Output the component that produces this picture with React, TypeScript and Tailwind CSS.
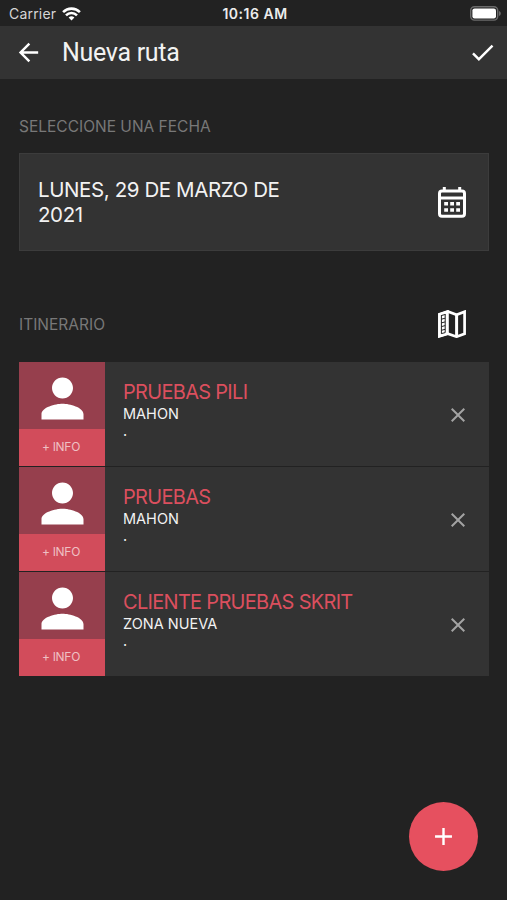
import React from 'react';

interface Stop {
  id: number;
  name: string;
  zone: string;
}

const stops: Stop[] = [
  { id: 1, name: 'PRUEBAS PILI', zone: 'MAHON' },
  { id: 2, name: 'PRUEBAS', zone: 'MAHON' },
  { id: 3, name: 'CLIENTE PRUEBAS SKRIT', zone: 'ZONA NUEVA' },
];

interface IconProps {
  d: string;
  className: string;
}

const Icon: React.FC<IconProps> = ({ d, className }) => (
  <svg viewBox="0 0 24 24" fill="currentColor" className={className}>
    <path d={d} />
  </svg>
);

const ARROW_BACK = 'M20 11H7.83l5.59-5.59L12 4l-8 8 8 8 1.41-1.41L7.83 13H20v-2z';
const CHECK = 'M9 16.17L4.83 12l-1.42 1.41L9 19 21 7l-1.41-1.41z';
const CLOSE = 'M19 6.41L17.59 5 12 10.59 6.41 5 5 6.41 10.59 12 5 17.59 6.41 19 12 13.41 17.59 19 19 17.59 13.41 12z';
const PERSON = 'M12 12c2.21 0 4-1.79 4-4s-1.79-4-4-4-4 1.79-4 4 1.79 4 4 4zm0 2c-2.67 0-8 1.34-8 4v2h16v-2c0-2.66-5.33-4-8-4z';
const ADD = 'M19 13h-6v6h-2v-6H5v-2h6V5h2v6h6v2z';

const StatusBar = () => (
  <div className="flex items-center h-[26px] pt-px pl-[9px] pr-[6px] text-white">
    <div className="flex flex-1 items-center gap-[6px]">
      <span className="text-[14px] leading-none tracking-[0.2px] text-[#d6d6d6]">Carrier</span>
      <svg viewBox="0 0 19 14" className="w-[19px] h-[14px]" fill="none" stroke="currentColor" strokeWidth="2.6">
        <path d="M1.1 5.1a12 12 0 0 1 16.8 0" />
        <path d="M4 8.3a7.8 7.8 0 0 1 11 0" />
        <path d="M9.5 13.6L6.6 10.6a4.1 4.1 0 0 1 5.8 0z" fill="currentColor" stroke="none" />
      </svg>
    </div>
    <span className="text-[14px] leading-none font-semibold tracking-[0.5px] text-[#ececec]">10:16 AM</span>
    <div className="flex flex-1 justify-end">
      <svg viewBox="0 0 31 15" className="w-[31px] h-[15px]">
        <rect x="0.7" y="0.7" width="27" height="13.4" rx="3.8" fill="none" stroke="#6b6b6b" strokeWidth="1.4" />
        <rect x="2.4" y="2.4" width="23.6" height="10" rx="2.2" fill="#fff" />
        <path d="M29 5v5c1.2-.4 1.8-1.3 1.8-2.5S30.2 5.4 29 5z" fill="#6b6b6b" />
      </svg>
    </div>
  </div>
);

const CalendarIcon = () => (
  <svg viewBox="0 0 28 32" className="w-[28px] h-[32px]" fill="none" stroke="#fff">
    <rect x="1.5" y="4.9" width="25" height="25.4" rx="2.5" strokeWidth="3" />
    <path d="M1 12h26" strokeWidth="3" />
    <path d="M6.3 1v4M21.7 1v4" strokeWidth="3" />
    <path d="M6.2 17.7h16M6.2 24h16" strokeWidth="3.6" strokeDasharray="3.8 2.2" />
  </svg>
);

const MapIcon = () => (
  <svg viewBox="0 0 28 28" className="w-[28px] h-[28px]" fill="none" stroke="#fff">
    <path d="M1.4 4.3L9.8 1.5l8.8 3.2 8-3v22l-8 3-8.8-3-8.4 2.6z" strokeWidth="2.7" />
    <path d="M18.6 5v21" strokeWidth="3" />
    {/* ruler along the left fold */}
    <path d="M1.4 4.3L9.8 1.5v22.2l-8.4 2.6z" fill="#fff" strokeWidth="2" />
    <path d="M3.4 5v18.8M7.2 4v18.6" stroke="#222222" strokeWidth="1" />
    <path d="M3.4 5.5l3.8-1M3.4 9.2l3.8-1M3.4 12.9l3.8-1M3.4 16.6l3.8-1M3.4 20.3l3.8-1M3.4 23.6l3.8-1" stroke="#222222" strokeWidth="1" />
  </svg>
);

const StopRow: React.FC<{ stop: Stop }> = ({ stop }) => (
  <div className="flex h-[104px] bg-[#333333]">
    <div className="flex flex-col w-[86px]">
      <div className="flex items-center justify-center h-[67px] pt-[6px] bg-[#963f4d]">
        <Icon d={PERSON} className="w-[63px] h-[63px] text-white" />
      </div>
      <button className="flex-1 pr-[2px] pb-px bg-[#d24c5b] text-[12px] leading-none tracking-[-0.3px] text-[#efc0c4]">+ INFO</button>
    </div>
    <div className="flex-1 pl-[18px] pt-[18px]">
      <div className="text-[20px] leading-[25px] tracking-[-0.7px] text-[#db4f5e]">{stop.name}</div>
      <div className="text-[14.5px] leading-[17px] text-[#f2f2f2]">{stop.zone}</div>
      <div className="text-[14.5px] leading-[17px] text-[#f2f2f2]">.</div>
    </div>
    <button className="flex items-center justify-center w-[62px] pt-px">
      <Icon d={CLOSE} className="w-[24px] h-[24px] text-[#a3a3a3]" />
    </button>
  </div>
);

export default function App() {
  return (
    <div className="flex flex-col w-[507px] h-[900px] bg-[#222222] overflow-hidden font-['Inter',sans-serif]">
      <StatusBar />

      <header className="flex items-center h-[53px] pl-[14px] pr-[10px] bg-[#333333] text-white">
        <Icon d={ARROW_BACK} className="w-[29px] h-[29px]" />
        <h1 className="flex-1 pl-[19px] font-['Roboto',sans-serif] text-[25px] leading-none tracking-[-0.3px] text-[#f2f2f2]">Nueva ruta</h1>
        <Icon d={CHECK} className="w-[29px] h-[29px]" />
      </header>

      <main className="flex flex-col flex-1 pl-[19px] pr-[18px] pt-[38px]">
        <div className="text-[15.5px] leading-[20px] text-[#787878]">SELECCIONE UNA FECHA</div>

        {/* Date picker */}
        <div className="flex items-center justify-between h-[98px] mt-[16px] pl-[18px] pr-[22px] bg-[#333333] border border-[#3c3c3c]">
          <div className="w-[260px] text-[20.5px] leading-[25px] tracking-[-0.4px] text-[#f2f2f2]">LUNES, 29 DE MARZO DE 2021</div>
          <CalendarIcon />
        </div>

        <div className="flex items-center justify-between mt-[59px] pr-[23px]">
          <span className="pt-px text-[15.5px] leading-[20px] text-[#787878]">ITINERARIO</span>
          <MapIcon />
        </div>

        <div className="flex flex-col gap-px mt-[24px]">
          {stops.map((stop) => (
            <StopRow key={stop.id} stop={stop} />
          ))}
        </div>

        <button className="flex items-center justify-center self-end w-[69px] h-[69px] mt-[126px] mr-[11px] rounded-full bg-[#e6505f] text-white">
          <Icon d={ADD} className="w-[29px] h-[29px]" />
        </button>
      </main>
    </div>
  );
}
